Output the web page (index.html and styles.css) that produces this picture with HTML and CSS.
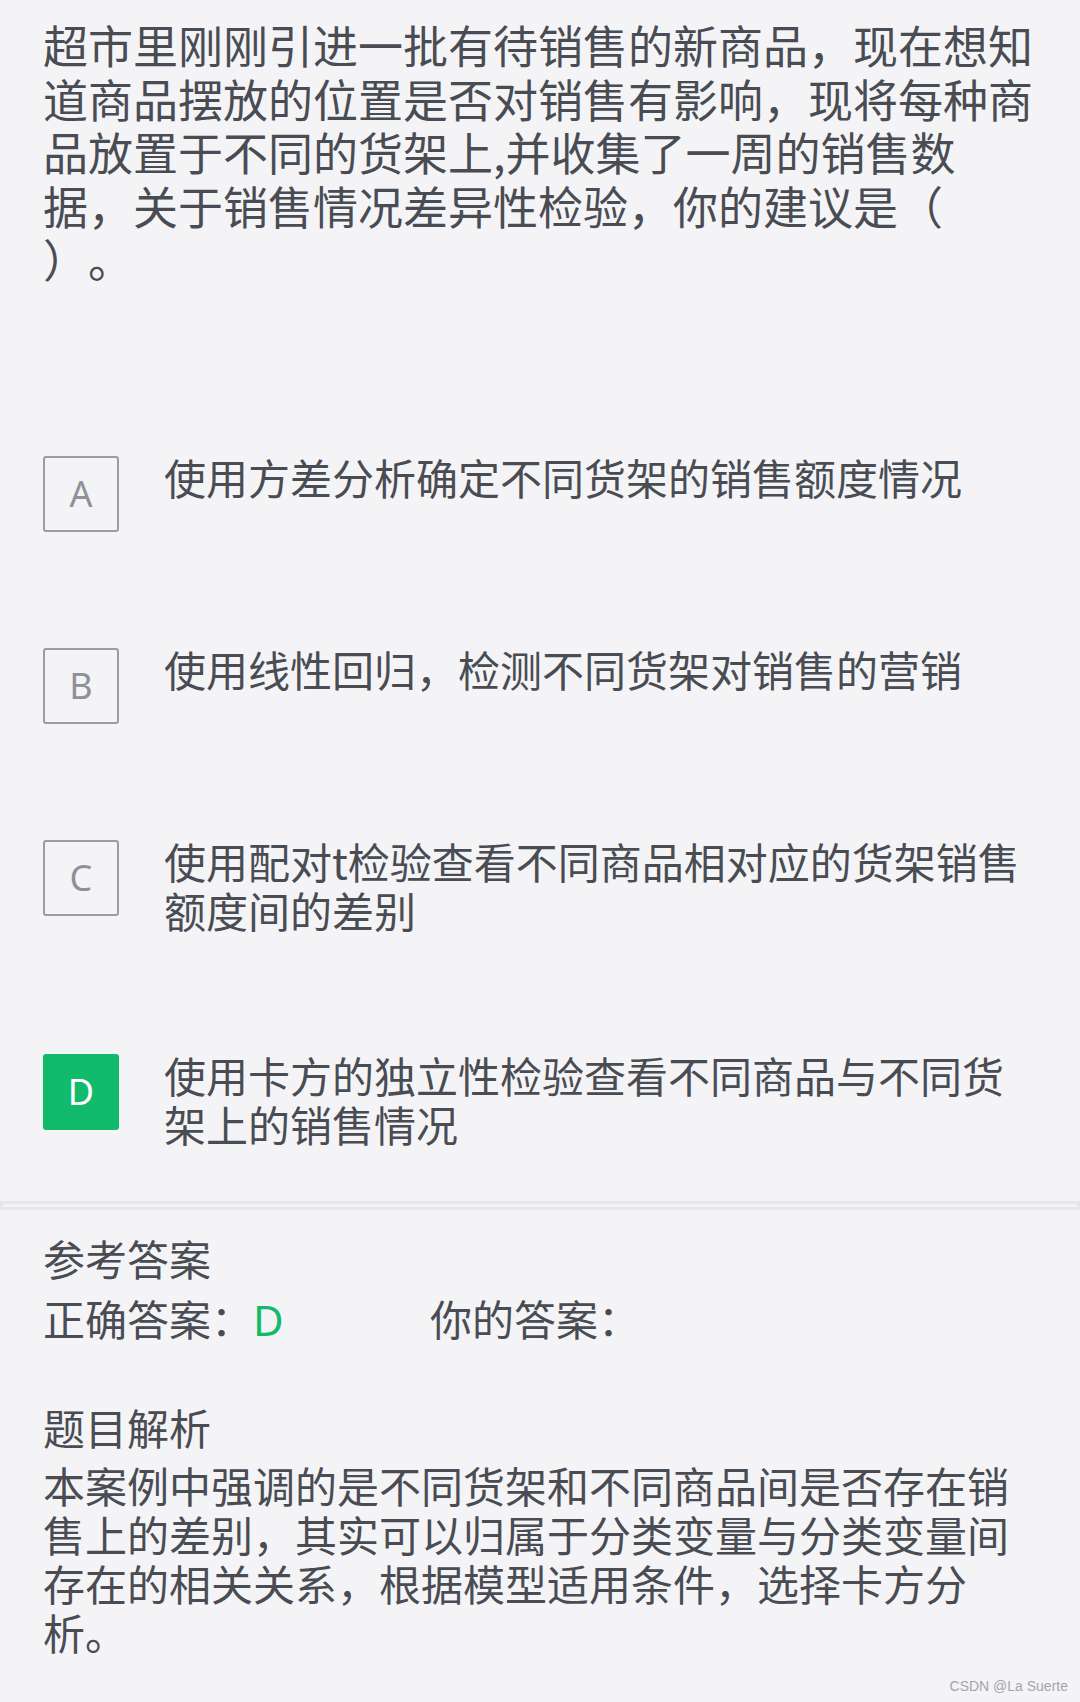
FILE: index.html
```html
<!DOCTYPE html>
<html lang="zh-CN">
<head>
  <meta charset="UTF-8" />
  <meta name="viewport" content="width=device-width, initial-scale=1.0"/>
  <title>题目解析</title>
  <link rel="stylesheet" href="styles.css">
</head>
<body>

  <div class="page">
    <div class="question">
      超市里刚刚引进一批有待销售的新商品，现在想知道商品摆放的位置是否对销售有影响，现将每种商品放置于不同的货架上,并收集了一周的销售数据，关于销售情况差异性检验，你的建议是（<br>）。
    </div>

    <div class="options">
      <div class="option">
        <div class="option-key">A</div>
        <div class="option-text">使用方差分析确定不同货架的销售额度情况</div>
      </div>
      <div class="option">
        <div class="option-key">B</div>
        <div class="option-text">使用线性回归，检测不同货架对销售的营销</div>
      </div>
      <div class="option">
        <div class="option-key">C</div>
        <div class="option-text">使用配对t检验查看不同商品相对应的货架销售额度间的差别</div>
      </div>
      <div class="option correct">
        <div class="option-key">D</div>
        <div class="option-text">使用卡方的独立性检验查看不同商品与不同货架上的销售情况</div>
      </div>
    </div>

    <div class="divider"><div class="divider-inner"></div></div>

    <div class="answer">
      <div class="section-title">参考答案</div>
      <div class="answer-row">
        <div class="answer-right">正确答案：<span class="green">D</span></div>
        <div class="answer-mine">你的答案：</div>
      </div>

      <div class="section-title analysis-title">题目解析</div>
      <div class="analysis">本案例中强调的是不同货架和不同商品间是否存在销售上的差别，其实可以归属于分类变量与分类变量间存在的相关关系，根据模型适用条件，选择卡方分析。</div>
    </div>

    <div class="watermark">CSDN @La Suerte</div>
  </div>

</body>
</html>
```

FILE: styles.css
```css
:root {
  --bg: #f4f4f7;
  --text: #4a4c53;
  --key: #9b9da4;
  --green: #12ba6c;
  --font: 'Noto Sans CJK SC', 'Noto Sans', sans-serif;
}

* {
  box-sizing: border-box;
}

body {
  margin: 0;
  background-color: var(--bg);
  color: var(--text);
  font-family: var(--font);
  text-spacing-trim: space-all;
}

.page {
  position: relative;
  min-height: 1702px;
}

.question {
  padding: 18px 43px 0;
  font-size: 45px;
  line-height: 53.5px;
}

.options {
  display: flex;
  flex-direction: column;
  gap: 116px;
  padding: 0 43px;
  margin-top: 170px;
}

.option {
  display: flex;
  align-items: flex-start;
  gap: 45px;
}

.option-key {
  flex: none;
  width: 76px;
  height: 76px;
  border: 2px solid var(--key);
  border-radius: 3px;
  display: flex;
  align-items: center;
  justify-content: center;
  font-family: 'Noto Sans', sans-serif;
  font-size: 36px;
  color: #8f9198;
}

.option.correct .option-key {
  background-color: var(--green);
  border-color: var(--green);
  color: white;
}

.option-text {
  flex: 1;
  margin: -4px 0 4px;
  font-size: 42px;
  line-height: 49px;
}

.divider {
  margin-top: 49px;
  height: 9px;
  background-color: #e6e6ec;
  padding: 3px 3px 0;
}

.divider-inner {
  height: 3px;
  background-color: #f1f1f6;
}

.answer {
  padding: 24px 43px 0;
  font-size: 42px;
  line-height: 48px;
}

.answer-row {
  display: flex;
  margin-top: 12px;
}

.answer-right {
  width: 387px;
}

.green {
  color: var(--green);
  font-family: 'Noto Sans', sans-serif;
}

.analysis-title {
  margin-top: 59px;
}

.analysis {
  margin-top: 9px;
  line-height: 49px;
}

.watermark {
  position: absolute;
  right: 12px;
  bottom: 8px;
  font-family: 'Liberation Sans', Arial, sans-serif;
  font-size: 14px;
  color: #a4a4a8;
}
```
